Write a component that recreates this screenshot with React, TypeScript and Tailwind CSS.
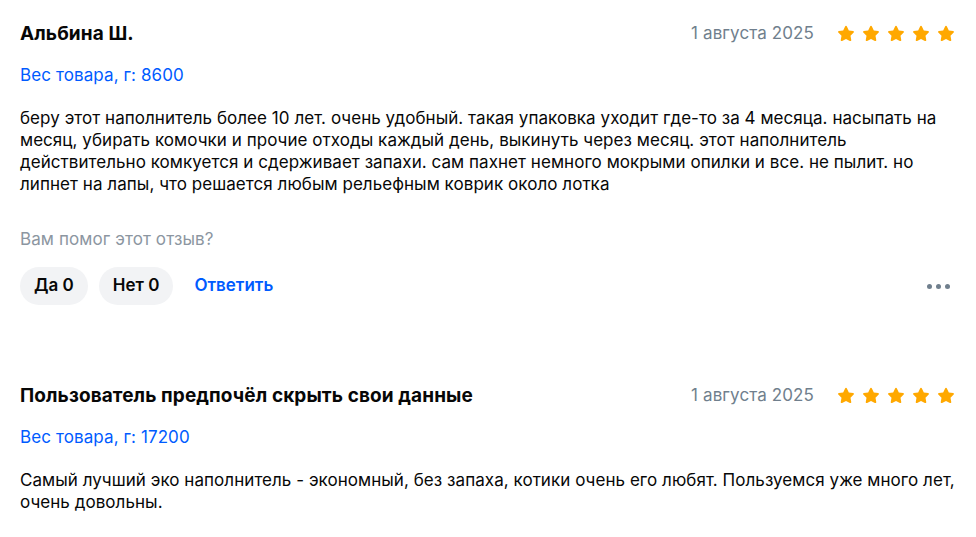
const font = { fontFamily: 'Inter, "Noto Sans", sans-serif' };

function Stars() {
    return (
        <div className="flex items-center gap-[5px]">
            {[0, 1, 2, 3, 4].map((i) => (
                <svg key={i} width="20" height="20" viewBox="0 0 24 24">
                    <path
                        d="M12 2.2c.5 0 .9.3 1.1.7l2.3 4.8 5.2.7c.9.1 1.3 1.3.6 1.9l-3.8 3.7.9 5.2c.2.9-.8 1.6-1.6 1.2L12 18l-4.7 2.4c-.8.4-1.8-.3-1.6-1.2l.9-5.2-3.8-3.7c-.7-.6-.3-1.8.6-1.9l5.2-.7 2.3-4.8c.2-.4.6-.7 1.1-.7z"
                        fill="#ffa800"
                    />
                </svg>
            ))}
        </div>
    );
}

type Review = {
    name: string;
    date: string;
    weight: string;
    text: string;
    actions: boolean;
};

const reviews: Review[] = [
    {
        name: 'Альбина Ш.',
        date: '1 августа 2025',
        weight: 'Вес товара, г: 8600',
        text: 'беру этот наполнитель более 10 лет. очень удобный. такая упаковка уходит где-то за 4 месяца. насыпать на месяц, убирать комочки и прочие отходы каждый день, выкинуть через месяц. этот наполнитель действительно комкуется и сдерживает запахи. сам пахнет немного мокрыми опилки и все. не пылит. но липнет на лапы, что решается любым рельефным коврик около лотка',
        actions: true,
    },
    {
        name: 'Пользователь предпочёл скрыть свои данные',
        date: '1 августа 2025',
        weight: 'Вес товара, г: 17200',
        text: 'Самый лучший эко наполнитель - экономный, без запаха, котики очень его любят. Пользуемся уже много лет, очень довольны.',
        actions: false,
    },
];

export default function App() {
    return (
        <main className="bg-white px-5 pt-[22px] text-[#070707]" style={font}>
            {reviews.map((r, idx) => (
                <section key={idx} className={idx > 0 ? 'mt-[79px]' : ''}>
                    {/* Header */}
                    <header className="flex h-6 items-center justify-between">
                        <h3 className="text-[19px] font-bold leading-6 tracking-[0.1px]">{r.name}</h3>
                        <div className="flex items-center gap-[22px]">
                            <span className="text-[17px] tracking-[0.1px] text-[#707f8d]">{r.date}</span>
                            <Stars />
                        </div>
                    </header>
                    <p className="mt-[19px] text-[17px] leading-5 tracking-[0.1px] text-[#005bff]">{r.weight}</p>

                    <p className="mt-[22px] text-[17px] leading-[22px] tracking-[0.05px]">{r.text}</p>

                    {r.actions && (
                        <>
                            <p className="mt-[34px] text-[17px] leading-5 tracking-[0.1px] text-[#8c96a1]">Вам помог этот отзыв?</p>
                            <div className="mt-[18px] flex items-center justify-between">
                                <div className="flex items-center gap-[11px]">
                                    <button className="h-[38px] rounded-full bg-[#f2f3f5] px-[14px] text-[17px] font-semibold">
                                        Да 0
                                    </button>
                                    <button className="h-[38px] rounded-full bg-[#f2f3f5] px-[14px] text-[17px] font-semibold">
                                        Нет 0
                                    </button>
                                    <button className="ml-[10px] text-[17px] font-semibold text-[#005bff]">Ответить</button>
                                </div>
                                <div className="mr-[6px] flex items-center gap-[4px]">
                                    <span className="h-[5px] w-[5px] rounded-full bg-[#707f8d]" />
                                    <span className="h-[5px] w-[5px] rounded-full bg-[#707f8d]" />
                                    <span className="h-[5px] w-[5px] rounded-full bg-[#707f8d]" />
                                </div>
                            </div>
                        </>
                    )}
                </section>
            ))}
        </main>
    );
}
